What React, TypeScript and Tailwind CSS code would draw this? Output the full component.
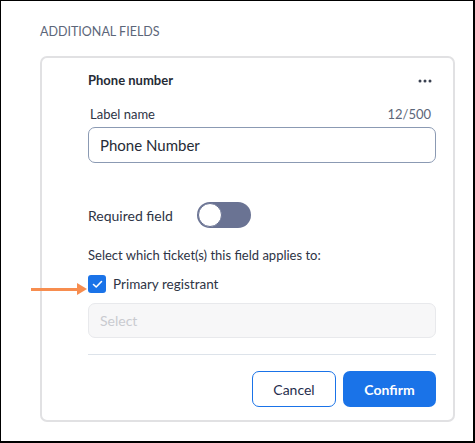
import React from "react";

export default function App() {
  return (
    <div
      className="w-[475px] h-[443px] bg-white border-black border-l border-t border-r-2 border-b-2 box-border overflow-hidden"
      style={{ fontFamily: "Lato, 'Noto Sans', sans-serif" }}
    >
      <div className="pl-[39px] pr-[18px] pt-[22px]">
        <div className="text-[12.5px] leading-[18px] text-[#5c6679]">ADDITIONAL FIELDS</div>
        <div className="mt-[15px] border-2 border-[#e1e1e3] rounded-[7px] h-[366px] pl-[46px] pr-[17px] pt-[13px]">
          <div className="flex items-center justify-between h-[20px]">
            <span className="text-[13px] font-bold text-[#262b36]">Phone number</span>
            <svg width="14" height="4" viewBox="0 0 14 4" className="mr-[4px]">
              <circle cx="2" cy="2" r="1.5" fill="#3a4150" />
              <circle cx="7" cy="2" r="1.5" fill="#3a4150" />
              <circle cx="12" cy="2" r="1.5" fill="#3a4150" />
            </svg>
          </div>
          <div className="mt-[15px] flex items-center justify-between h-[18px] text-[13px] text-[#2e3445]">
            <span className="pl-[2px]">Label name</span>
            <span className="text-[#5c6679] pr-[5px]">12/500</span>
          </div>
          <div className="mt-[3px] h-[36px] border border-[#8b9ab3] rounded-[7px] flex items-center pl-[11px] text-[15px] text-[#262b36]">
            Phone Number
          </div>
          <div className="mt-[38px] flex items-center h-[28px] gap-[24px]">
            <span className="text-[14px] text-[#2e3445]">Required field</span>
            <div className="w-[54px] h-[26px] rounded-full bg-[#6a7393] relative">
              <div className="absolute left-[1px] top-[1px] w-[24px] h-[24px] rounded-full bg-white border border-[#6a7393]" />
            </div>
          </div>
          <div className="mt-[17px] text-[13px] text-[#2e3445] h-[18px] leading-[18px]">
            Select which ticket(s) this field applies to:
          </div>
          <div className="mt-[11px] flex items-center h-[18px] gap-[7px] relative">
            <div className="absolute left-[-57px] top-[8px] flex items-center">
              <div className="w-[46px] h-[3px] bg-[#f78d4f]" />
              <svg width="10" height="12" viewBox="0 0 10 12">
                <path d="M0 0 L10 6 L0 12 Z" fill="#f78d4f" />
              </svg>
            </div>
            <div className="w-[18px] h-[18px] rounded-[3px] bg-[#1a73e8] flex items-center justify-center">
              <svg width="11" height="9" viewBox="0 0 11 9">
                <path d="M1.5 4.5 L4.2 7 L9.5 1.5" fill="none" stroke="white" strokeWidth="1.6" strokeLinecap="round" strokeLinejoin="round" />
              </svg>
            </div>
            <span className="text-[13.5px] text-[#2e3445]">Primary registrant</span>
          </div>
          <div className="mt-[10px] h-[35px] bg-[#f7f7f8] border border-[#e8e9ec] rounded-[7px] flex items-center pl-[11px] text-[14px] text-[#c9cbd0]">
            Select
          </div>
          <div className="mt-[16px] h-px bg-[#dde3ea]" />
          <div className="mt-[16px] flex justify-end gap-[7px]">
            <button className="w-[84px] h-[36px] rounded-[7px] border border-[#1a73e8] bg-white text-[14px] text-[#1f2d4d]">
              Cancel
            </button>
            <button className="w-[93px] h-[36px] rounded-[7px] bg-[#1a73e8] text-[14px] font-bold text-white">
              Confirm
            </button>
          </div>
        </div>
      </div>
    </div>
  );
}
